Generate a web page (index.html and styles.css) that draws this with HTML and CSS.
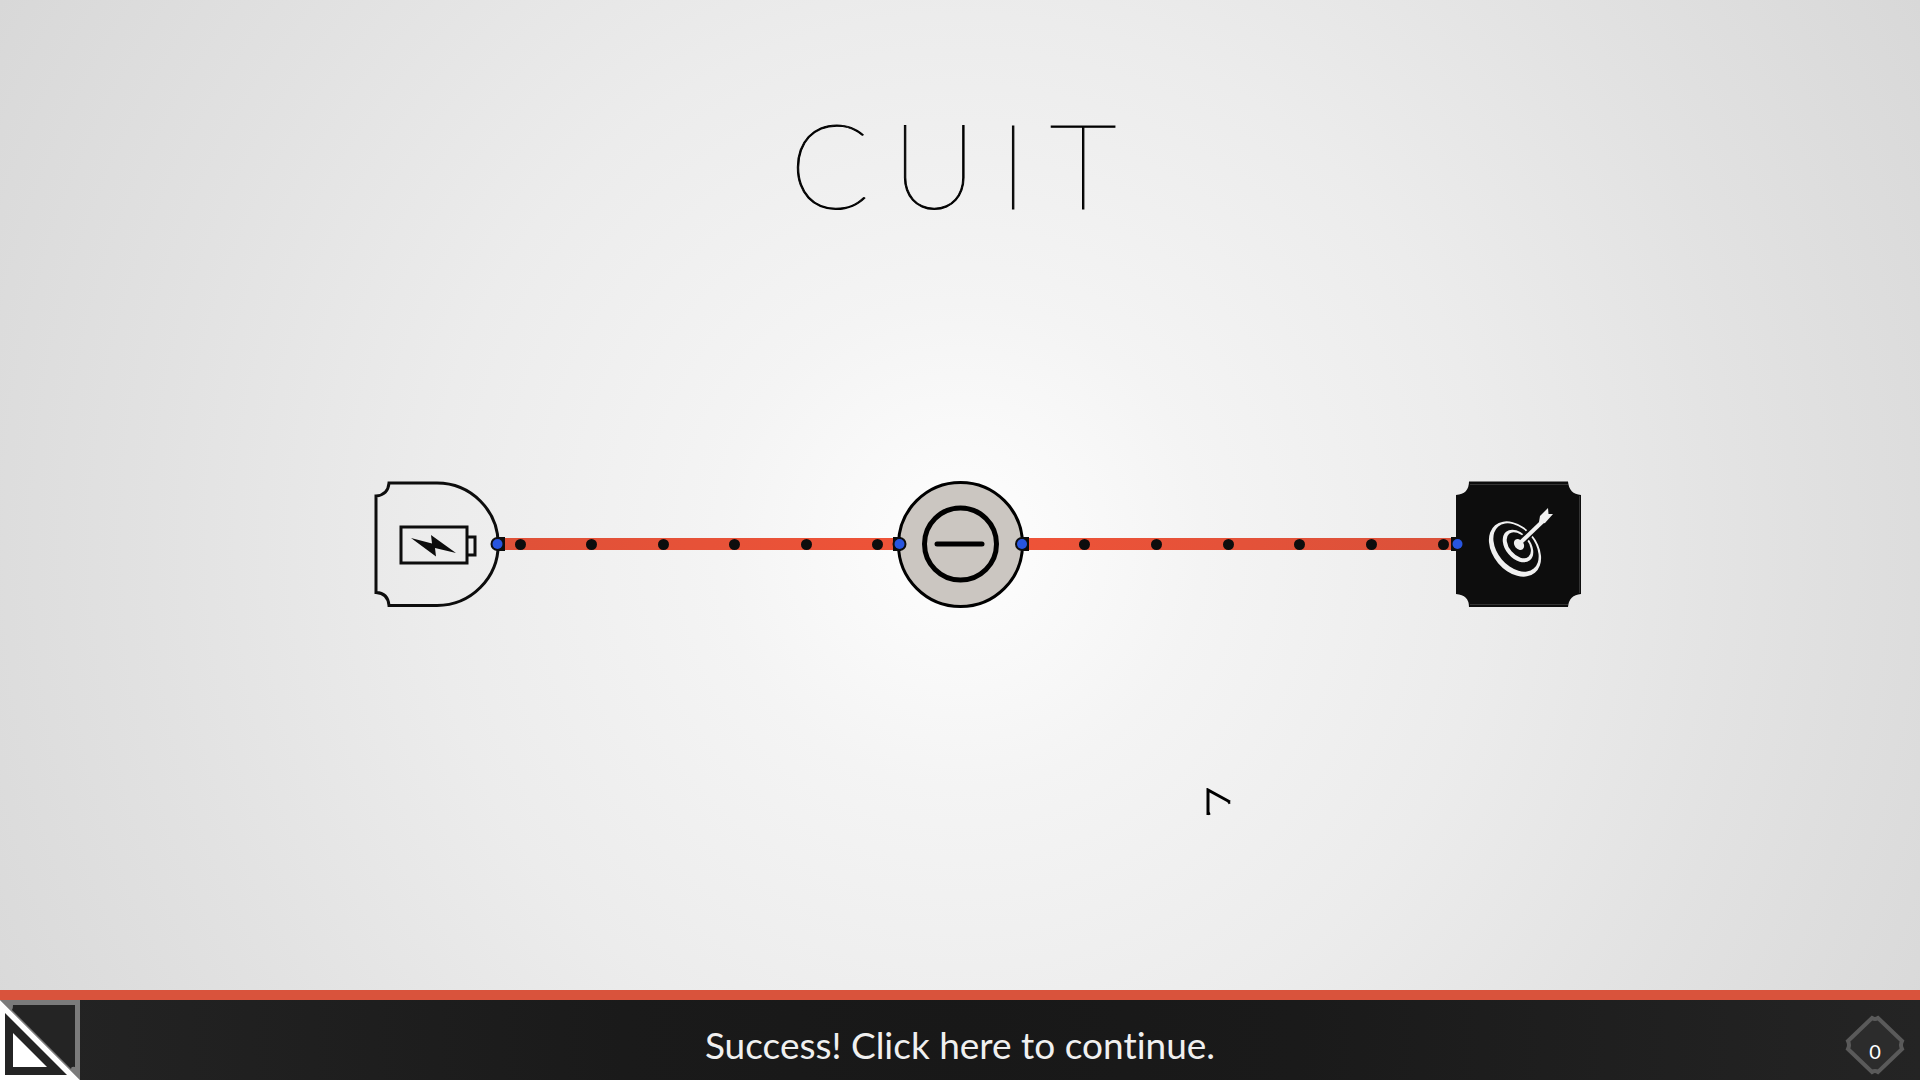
FILE: index.html
```html
<!DOCTYPE html>
<html lang="en">
<head>
<meta charset="utf-8">
<meta name="viewport" content="width=device-width, initial-scale=1">
<title>Cuit</title>
<link rel="stylesheet" href="styles.css">
</head>
<body>
<main class="stage">
  <h1 class="title">CUIT</h1>
  <div class="circuit">
    <svg class="node source" viewBox="0 0 126 126" role="img" aria-label="Battery">
      <path class="outline" d="M15 2H63A61 61 0 0 1 63 124.500H15Q14 112 2 111.500V15Q14 14 15 2Z"/>
      <path class="outline" d="M27 46H93V82H27ZM93 56H101V74H93"/>
      <path d="M37 57L58 62.500 57 54 82 72 61 67 62 75.500Z"/>
      <path d="M124 56h7v14h-7z"/>
      <circle cx="123.500" cy="63" r="7"/><circle class="port" cx="123.500" cy="63" r="5"/>
    </svg>
    <div class="wire wire-in"><i></i><i></i><i></i><i></i><i></i><i></i></div>
    <svg class="node resistor" viewBox="0 0 126 126" role="img" aria-label="Connector">
      <circle class="disc" cx="62.500" cy="63.500" r="62"/>
      <circle class="ring" cx="62.500" cy="63" r="36"/>
      <path class="bar" d="M39 63H84"/>
      <path d="M-5 56h8v14h-8zM123 56h8v14h-8z"/>
      <circle cx="1.500" cy="63" r="7"/><circle class="port" cx="1.500" cy="63" r="5"/>
      <circle cx="124" cy="63" r="7"/><circle class="port" cx="124" cy="63" r="5"/>
    </svg>
    <div class="wire wire-out"><i></i><i></i><i></i><i></i><i></i><i></i></div>
    <svg class="node target" viewBox="0 0 126 126" role="img" aria-label="Target">
      <path d="M13 .500H112Q113 13 125 14V113Q113 114 112 126H13Q13 114 0 113V14Q13 13 13 .500Z"/>
      <path class="trim" d="M14 3.500H112M14 123.500H112M123.500 15V112"/>
      <path d="M-5 56h8v14h-8z"/><circle class="port" cx="1.500" cy="63" r="5"/>
      <ellipse class="light" cx="59" cy="68" rx="22" ry="31" transform="rotate(-40 59 68)"/>
      <ellipse cx="60" cy="66.500" rx="18.500" ry="27.500" transform="rotate(-40 60 66.500)"/>
      <ellipse class="light" cx="62" cy="65" rx="12.500" ry="18.500" transform="rotate(-40 62 65)"/>
      <ellipse cx="62.800" cy="64.200" rx="9.500" ry="15" transform="rotate(-40 62.800 64.200)"/>
      <path class="shaft-edge" d="M66 60L82 44"/>
      <ellipse class="light" cx="63" cy="63.500" rx="4.500" ry="6" transform="rotate(-38 63 63.500)"/>
      <path class="shaft" d="M63 63L86 41"/>
      <path class="light" d="M83 41L84 35 92 27 92.500 33 97 33 89 42 85 43Z"/>
    </svg>
  </div>
  <svg class="pointer" viewBox="0 0 26 30" aria-hidden="true"><path d="M2 27V2L24 14"/><path d="M2 26L4 25M22 15L24 14"/></svg>
</main>
<footer class="footer">
  <button class="tool" type="button" aria-label="Edit">
    <svg viewBox="0 0 80 80" aria-hidden="true">
      <path class="frame" d="M0 0H80V80Z"/>
      <path class="panel" d="M13 5H75V67Q71 66 71 69L12 10Q13 9 13 5Z"/>
      <path class="white" d="M0 0L80 80H0Z"/>
      <path class="panel" d="M5 13L67 75H5Z"/>
      <path class="white" d="M13 33L47 67H13Z"/>
    </svg>
  </button>
  <button class="continue" type="button">Success! Click here to continue.</button>
  <button class="counter" type="button">
    <svg viewBox="0 0 60 60" aria-hidden="true"><path d="M27 3Q30 5 33 3L57 26Q55 30 57 34L33 57Q30 55 27 57L3 34Q5 30 3 26Z"/></svg>
    <span>0</span>
  </button>
</footer>
</body>
</html>
```
FILE: styles.css
```css
* { box-sizing: border-box; }
body {
  margin: 0;
  min-height: 100vh;
  display: flex;
  flex-direction: column;
  font-family: Lato, sans-serif;
  color: #000;
}
button {
  padding: 0;
  border: 0;
  background: none;
  color: #f0f0f0;
  font: inherit;
  cursor: pointer;
}
.stage {
  position: relative;
  flex: 1;
  padding-top: 92px;
  background: radial-gradient(circle at 50% 55%, #fefefe 0%, #f4f4f4 22%, #ececec 48%, #e2e2e2 73%, #d8d8d8 100%);
}
.title {
  margin: 0;
  padding-left: 8px;
  text-align: center;
  font-size: 118px;
  line-height: 144px;
  font-weight: 100;
  letter-spacing: 22px;
  -webkit-text-stroke: 1px #000;
}
.circuit {
  display: grid;
  grid-template-columns: 374fr 126px 398fr 126px 432fr 126px 338fr;
  align-items: center;
  margin-top: 245px;
}
.node {
  display: block;
  width: 126px;
  height: 126px;
  overflow: visible;
  position: relative;
  fill: #0d0d0d;
}
.source { grid-column: 2; }
.outline { fill: none; stroke: #0d0d0d; stroke-width: 3; }
.port { fill: #2855e0; }
.disc { fill: #cbc6c1; stroke: #000; stroke-width: 3; }
.ring { fill: none; stroke: #000; stroke-width: 5; }
.bar { stroke: #000; stroke-width: 5; stroke-linecap: round; }
.trim { stroke: #333; stroke-width: 1; }
.light { fill: #f0f0f0; }
.shaft { stroke: #f0f0f0; stroke-width: 4; }
.shaft-edge { stroke: #0d0d0d; stroke-width: 8; }
.wire {
  display: flex;
  align-items: center;
  justify-content: space-between;
  height: 12px;
}
.wire i {
  width: 11px;
  height: 11px;
  border-radius: 50%;
  background: #0d0d0d;
}
.wire-in { padding: 0 15px; background: linear-gradient(90deg, #df5138, #ee5338); }
.wire-out { padding: 0 7px 0 55px; background: linear-gradient(90deg, #ee5338, #da513a); }
.pointer {
  position: absolute;
  left: 62.8%;
  top: 79.6%;
  width: 26px;
  height: 30px;
  fill: none;
  stroke: #000;
  stroke-width: 3;
}
.footer {
  display: grid;
  grid-template-columns: 80px 1fr 80px;
  align-items: center;
  border-top: 10px solid #d9533c;
  background: radial-gradient(circle at center, #181818 0%, #1a1a1a 35%, #242424 100%);
}
.tool, .tool svg { display: block; width: 80px; height: 80px; }
.frame { fill: #7b7b7b; }
.panel { fill: #242424; }
.white { fill: #fff; }
.continue {
  height: 80px;
  padding-top: 10px;
  font-size: 37px;
  line-height: 48px;
  font-variant-ligatures: none;
}
.counter {
  display: grid;
  place-items: center;
  width: 60px;
  height: 60px;
  margin: 10px 0 0 5px;
}
.counter svg, .counter span { grid-area: 1 / 1; }
.counter svg {
  width: 60px;
  height: 60px;
  fill: #2c2c2c;
  stroke: #5a5a5a;
  stroke-width: 4;
}
.counter span {
  padding-top: 12px;
  font-size: 20px;
  line-height: 24px;
  color: #fff;
}
```
